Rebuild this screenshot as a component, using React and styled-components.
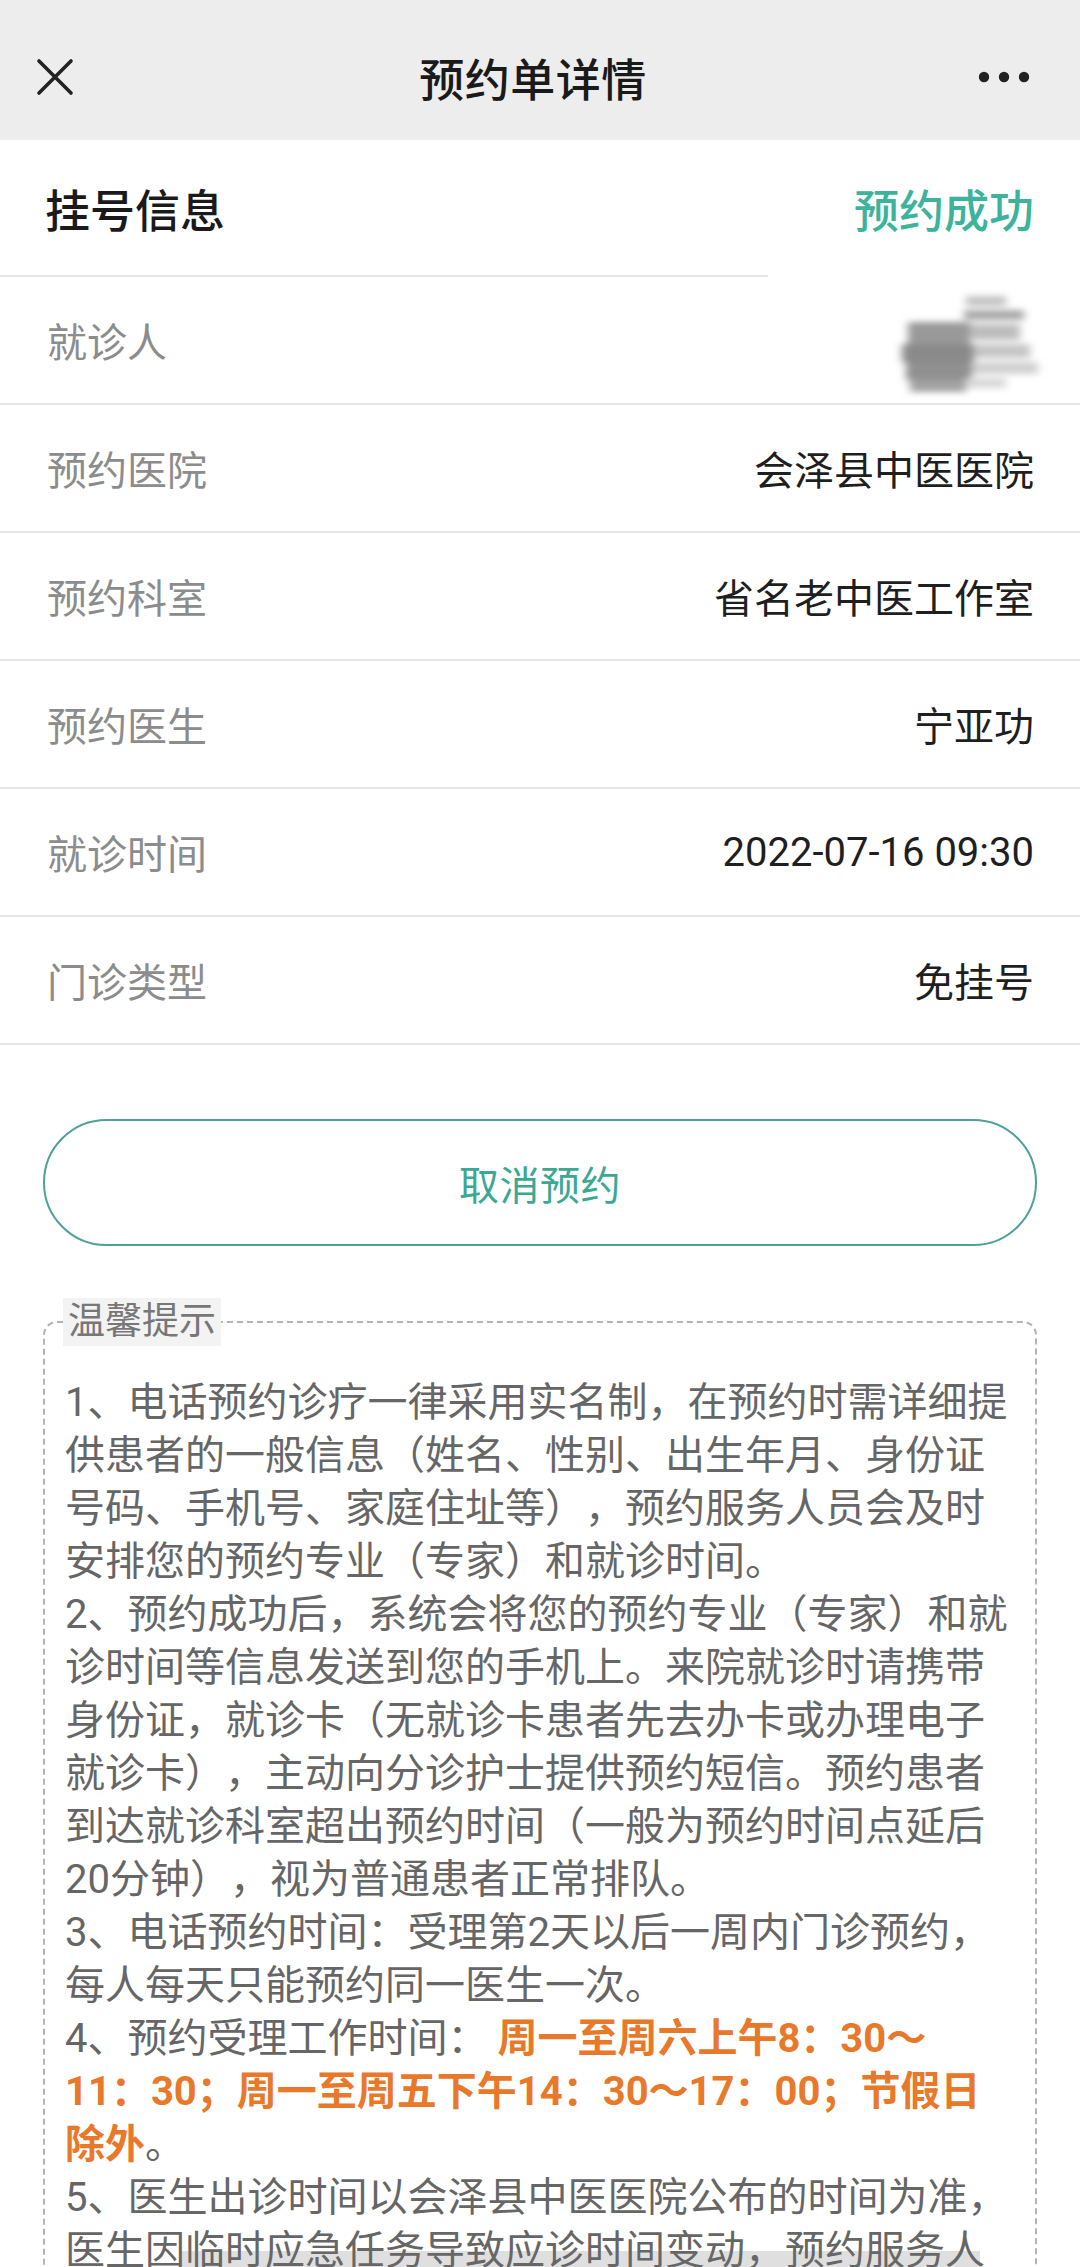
import React from 'react';
import styled, { createGlobalStyle } from 'styled-components';

const GlobalStyle = createGlobalStyle`
  html, body {
    margin: 0;
    padding: 0;
    background: #ffffff;
  }
  body {
    font-family: Roboto, "Noto Sans CJK SC", "Noto Sans", sans-serif;
    -webkit-font-smoothing: antialiased;
    text-spacing-trim: space-all;
  }
`;

const Page = styled.div`
  width: 1080px;
  min-height: 2400px;
  background: #ffffff;
`;

const NavBar = styled.div`
  display: grid;
  grid-template-columns: 120px 1fr 134px;
  align-items: center;
  height: 140px;
  box-sizing: border-box;
  padding: 14px 36px 0 36px;
  background: #ededed;
`;

const NavTitle = styled.div`
  text-align: center;
  font-size: 45px;
  font-weight: 500;
  color: #1a1a1a;
  letter-spacing: 0.5px;
`;

const NavRight = styled.div`
  display: flex;
  justify-content: flex-end;
  padding-right: 14px;
`;

const SectionHead = styled.div`
  display: flex;
  align-items: center;
  justify-content: space-between;
  height: 137px;
  box-sizing: border-box;
  padding: 0 46px 0 45px;
  background: linear-gradient(#e6e6e6, #e6e6e6) no-repeat left bottom / 768px 2px;
`;

const SectionTitle = styled.div`
  font-size: 45px;
  font-weight: 500;
  color: ${props => props.accent ? '#3cb39a' : '#1a1a1a'};
`;

const Row = styled.div`
  display: flex;
  align-items: center;
  justify-content: space-between;
  height: 128px;
  box-sizing: border-box;
  padding: 0 46px 0 47px;
  border-bottom: 2px solid #e6e6e6;
`;

const Label = styled.div`
  font-size: 40px;
  color: #8c8c8c;
`;

const Value = styled.div`
  font-size: 40px;
  color: #1f1f1f;
`;

const Smudge = styled.svg`
  display: block;
  margin: 8px -26px 0 0;
`;

const CancelButton = styled.button`
  display: block;
  box-sizing: border-box;
  width: 994px;
  height: 127px;
  margin: 74px 0 0 43px;
  border: 2px solid #4fa198;
  border-radius: 64px;
  background: #ffffff;
  font-family: inherit;
  font-size: 40px;
  color: #3aa892;
  letter-spacing: 0.5px;
`;

const Tips = styled.fieldset`
  box-sizing: border-box;
  width: 994px;
  margin: 52px 0 0 43px;
  padding: 30px 24px 30px 20px;
  border: 2px dashed #b4b4b4;
  border-radius: 14px;
  min-inline-size: 0;
`;

const TipsLegend = styled.legend`
  margin-left: -2px;
  padding: 0 5px;
  background: #f3f3f3;
  font-size: 37px;
  line-height: 48px;
  color: #777777;
`;

const TipText = styled.p`
  margin: 0;
  font-size: 40px;
  line-height: 53px;
  color: #666666;
  text-spacing-trim: space-all;
`;

const Highlight = styled.span`
  color: #e8782a;
  font-weight: 700;
`;

const HomeBar = styled.div`
  position: fixed;
  left: 180px;
  bottom: 0;
  width: 800px;
  height: 16px;
  background: rgba(110, 110, 110, 0.22);
`;

const CloseIcon = () => (
  <svg width="38" height="38" viewBox="0 0 38 38">
    <path d="M3 3 L35 35 M35 3 L3 35" stroke="#222" strokeWidth="3.6" strokeLinecap="round" />
  </svg>
);

const MoreIcon = () => (
  <svg width="52" height="12" viewBox="0 0 52 12">
    <circle cx="6" cy="6" r="5.2" fill="#222" />
    <circle cx="26" cy="6" r="5.2" fill="#222" />
    <circle cx="46" cy="6" r="5.2" fill="#222" />
  </svg>
);

// the patient's name is pixelated in the screenshot
const NameSmudge = () => (
  <Smudge width="176" height="120" viewBox="0 0 176 120">
    <defs>
      <filter id="smear" x="-20%" y="-20%" width="140%" height="140%">
        <feGaussianBlur stdDeviation="4 3" />
      </filter>
    </defs>
    <g filter="url(#smear)">
      <rect x="82" y="12" width="40" height="10" fill="#c2c2c2" />
      <rect x="80" y="26" width="60" height="10" fill="#a8a8a8" />
      <rect x="24" y="38" width="62" height="22" fill="#999999" />
      <rect x="86" y="40" width="50" height="16" fill="#bdbdbd" />
      <rect x="18" y="60" width="72" height="18" fill="#8a8a8a" />
      <rect x="90" y="60" width="56" height="14" fill="#c6c6c6" />
      <rect x="22" y="78" width="66" height="18" fill="#909090" />
      <rect x="88" y="78" width="66" height="12" fill="#d0d0d0" />
      <rect x="26" y="96" width="56" height="12" fill="#a3a3a3" />
      <rect x="82" y="94" width="40" height="10" fill="#d8d8d8" />
    </g>
  </Smudge>
);

const rows = [
  ['预约医院', '会泽县中医医院'],
  ['预约科室', '省名老中医工作室'],
  ['预约医生', '宁亚功'],
  ['就诊时间', '2022-07-16 09:30'],
  ['门诊类型', '免挂号'],
];

export default function App() {
  return (
    <Page>
      <GlobalStyle />
      <NavBar>
        <CloseIcon />
        <NavTitle>预约单详情</NavTitle>
        <NavRight>
          <MoreIcon />
        </NavRight>
      </NavBar>

      <SectionHead>
        <SectionTitle>挂号信息</SectionTitle>
        <SectionTitle accent>预约成功</SectionTitle>
      </SectionHead>
      <Row>
        <Label>就诊人</Label>
        <NameSmudge />
      </Row>
      {rows.map(([label, value]) => (
        <Row key={label}>
          <Label>{label}</Label>
          <Value>{value}</Value>
        </Row>
      ))}

      <CancelButton>取消预约</CancelButton>

      <Tips>
        <TipsLegend>温馨提示</TipsLegend>
        <TipText>
          1、电话预约诊疗一律采用实名制，在预约时需详细提供患者的一般信息（姓名、性别、出生年月、身份证号码、手机号、家庭住址等），预约服务人员会及时安排您的预约专业（专家）和就诊时间。
        </TipText>
        <TipText>
          2、预约成功后，系统会将您的预约专业（专家）和就诊时间等信息发送到您的手机上。来院就诊时请携带身份证，就诊卡（无就诊卡患者先去办卡或办理电子就诊卡），主动向分诊护士提供预约短信。预约患者到达就诊科室超出预约时间（一般为预约时间点延后20分钟），视为普通患者正常排队。
        </TipText>
        <TipText>
          3、电话预约时间：受理第2天以后一周内门诊预约，每人每天只能预约同一医生一次。
        </TipText>
        <TipText>
          4、预约受理工作时间： <Highlight>周一至周六上午8：30～11：30；周一至周五下午14：30～17：00；节假日除外</Highlight>。
        </TipText>
        <TipText>
          5、医生出诊时间以会泽县中医医院公布的时间为准，医生因临时应急任务导致应诊时间变动，预约服务人员会及时通知您。
        </TipText>
      </Tips>
      <HomeBar />
    </Page>
  );
}
